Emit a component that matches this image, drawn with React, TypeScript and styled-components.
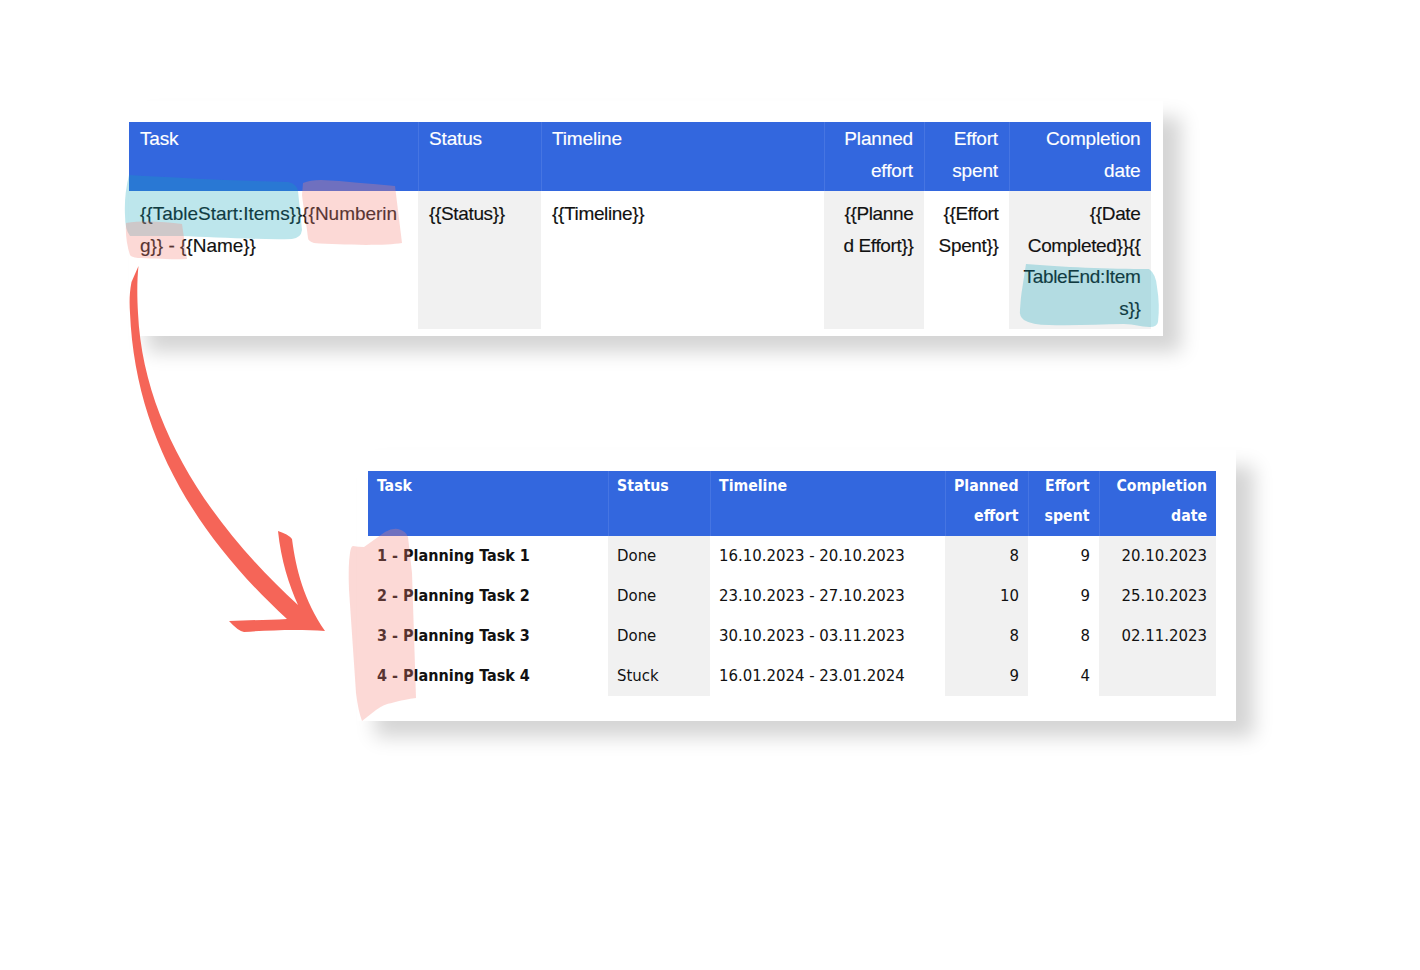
import React from 'react';
import styled, { createGlobalStyle, css } from 'styled-components';

type Align = 'left' | 'right';

interface Column {
  label: string[];
  width: number;
  align: Align;
  shaded: boolean;
}

const templateColumns: Column[] = [
  { label: ['Task'], width: 289, align: 'left', shaded: false },
  { label: ['Status'], width: 123, align: 'left', shaded: true },
  { label: ['Timeline'], width: 283, align: 'left', shaded: false },
  { label: ['Planned', 'effort'], width: 100, align: 'right', shaded: true },
  { label: ['Effort', 'spent'], width: 85, align: 'right', shaded: false },
  { label: ['Completion', 'date'], width: 142, align: 'right', shaded: true },
];

const templateRow = [
  ['{{TableStart:Items}}{{Numberin', 'g}} - {{Name}}'],
  ['{{Status}}'],
  ['{{Timeline}}'],
  ['{{Planne', 'd Effort}}'],
  ['{{Effort', 'Spent}}'],
  ['{{Date', 'Completed}}{{', 'TableEnd:Item', 's}}'],
];

const resultColumns: Column[] = [
  { label: ['Task'], width: 240, align: 'left', shaded: false },
  { label: ['Status'], width: 102, align: 'left', shaded: true },
  { label: ['Timeline'], width: 235, align: 'left', shaded: false },
  { label: ['Planned', 'effort'], width: 83, align: 'right', shaded: true },
  { label: ['Effort', 'spent'], width: 71, align: 'right', shaded: false },
  { label: ['Completion', 'date'], width: 117, align: 'right', shaded: true },
];

const resultRows = [
  ['1 - Planning Task 1', 'Done', '16.10.2023 - 20.10.2023', '8', '9', '20.10.2023'],
  ['2 - Planning Task 2', 'Done', '23.10.2023 - 27.10.2023', '10', '9', '25.10.2023'],
  ['3 - Planning Task 3', 'Done', '30.10.2023 - 03.11.2023', '8', '8', '02.11.2023'],
  ['4 - Planning Task 4', 'Stuck', '16.01.2024 - 23.01.2024', '9', '4', ''],
];

const App = () => {
  return (
    <Page>
      <GlobalStyle />
      <TemplateCard>
        <TemplateTable>
          <colgroup>
            {templateColumns.map((c) => (
              <col key={c.label[0]} width={c.width} />
            ))}
          </colgroup>
          <thead>
            <tr>
              {templateColumns.map((c) => (
                <TemplateHead key={c.label[0]} $align={c.align}>
                  {c.label.map((line) => (
                    <Line key={line}>{line}</Line>
                  ))}
                </TemplateHead>
              ))}
            </tr>
          </thead>
          <tbody>
            <tr>
              {templateColumns.map((c, i) => (
                <TemplateCell key={c.label[0]} $align={c.align} $shaded={c.shaded}>
                  {templateRow[i].map((line) => (
                    <Line key={line}>{line}</Line>
                  ))}
                </TemplateCell>
              ))}
            </tr>
          </tbody>
        </TemplateTable>
      </TemplateCard>

      <ResultCard>
        <ResultTable>
          <colgroup>
            {resultColumns.map((c) => (
              <col key={c.label[0]} width={c.width} />
            ))}
          </colgroup>
          <thead>
            <tr>
              {resultColumns.map((c) => (
                <ResultHead key={c.label[0]} $align={c.align}>
                  {c.label.map((line) => (
                    <Line key={line}>{line}</Line>
                  ))}
                </ResultHead>
              ))}
            </tr>
          </thead>
          <tbody>
            {resultRows.map((row) => (
              <tr key={row[0]}>
                {resultColumns.map((c, i) => (
                  <ResultCell key={c.label[0]} $align={c.align} $shaded={c.shaded} $strong={i === 0}>
                    {row[i]}
                  </ResultCell>
                ))}
              </tr>
            ))}
          </tbody>
        </ResultTable>
      </ResultCard>

      <Scribbles viewBox="0 0 1420 970" aria-hidden="true">
        <BlueMarker d="M129 175 C180 178 240 181 288 182 Q297 184 298 191 L302 230 Q301 238 292 239 C260 240 210 237 182 236 L130 236 Q125 230 125 215 Q124 195 129 175 Z" />
        <PinkMarker d="M126 223 C145 220 165 222 182 224 L187 259 C170 260 150 258 138 258 Q131 257 130 255 Q125 240 126 223 Z" />
        <PinkMarker d="M303 183 Q310 180 321 180 C345 181 370 184 395 186 L402 243 C385 246 340 245 314 243 Q308 241 308 238 C306 220 303 205 302 195 Z" />
        <BlueMarker d="M1026 264 C1060 267 1110 269 1149 269 Q1156 274 1157 287 Q1160 305 1158 322 Q1157 327 1150 327 C1140 327 1135 324 1124 324 C1100 324 1075 326 1049 325 Q1032 325 1024 320 Q1019 316 1020 310 Q1021 295 1022 290 Z" />
        <PinkMarker d="M350 553 Q351 546 353 546 Q358 547 364 547 L385 532 Q392 528 398 529 Q406 531 408 537 L412 573 L416 698 C400 700 392 703 392 703 Q384 704 376 710 L362 721 Q358 710 356 693 L349 590 Q348 565 350 553 Z" />
        <path
          fill="#f56558"
          d="M138.5 266 L131.5 282 C129 295 129.5 305 130 313 C135 430 190 530 287 619 C270 620 250 620 229 621 Q238 631 244 632 C270 630 300 629 325 631 C304 600 296 570 292 539 Q288 534 278 531 C281 560 289 585 298 605 C205 520 143 420 138 313 C137 295 137 280 138.5 266 Z"
        />
      </Scribbles>
    </Page>
  );
};

export default App;

const GlobalStyle = createGlobalStyle`
  html,
  body {
    margin: 0;
    padding: 0;
    background: #fff;
  }
`;

const Page = styled.main`
  position: relative;
  width: 1420px;
  height: 970px;
  overflow: hidden;
  padding-top: 101px;
  box-sizing: border-box;
  background: #fff;
`;

const Card = styled.section`
  background: #fff;
  box-shadow: 18px 16px 18px rgba(0, 0, 0, 0.17);
  box-sizing: border-box;
`;

const TemplateCard = styled(Card)`
  width: 1034px;
  margin-left: 129px;
  padding: 21px 12px 7px 0;
`;

const ResultCard = styled(Card)`
  width: 879px;
  margin: 114px 0 0 357px;
  padding: 21px 20px 25px 11px;
`;

const Table = styled.table`
  border-collapse: collapse;
  table-layout: fixed;
  width: 100%;
`;

const TemplateTable = styled(Table)`
  font-family: 'Liberation Sans', Arial, sans-serif;
  font-size: 19px;
  -webkit-text-stroke: 0.15px currentColor;
`;

const ResultTable = styled(Table)`
  font-family: 'DejaVu Sans Condensed', 'DejaVu Sans', sans-serif;
  font-stretch: condensed;
  font-size: 16.6px;
`;

const Line = styled.div`
  white-space: nowrap;
`;

const Head = styled.th<{ $align: Align }>`
  background: #3367de;
  color: #fff;
  vertical-align: top;
  text-align: ${({ $align }) => $align};
  border-left: 1px solid #4675e2;
  box-sizing: border-box;
  &:first-child {
    border-left: 0;
  }
`;

const TemplateHead = styled(Head)`
  height: 69px;
  padding: 1px 10.5px 0;
  font-weight: 400;
  line-height: 32px;
  letter-spacing: -0.15px;
  &:first-child {
    padding-left: 11px;
  }
`;

const ResultHead = styled(Head)`
  height: 65px;
  padding: 0 9px 0 8.5px;
  font-size: 15.7px;
  font-weight: 700;
  line-height: 30px;
  &:first-child {
    padding-left: 9px;
  }
`;

const bodyCell = css<{ $align: Align; $shaded: boolean }>`
  color: #111;
  vertical-align: top;
  box-sizing: border-box;
  text-align: ${({ $align }) => $align};
  background: ${({ $shaded }) => ($shaded ? '#f1f1f1' : '#fff')};
`;

const TemplateCell = styled.td<{ $align: Align; $shaded: boolean }>`
  ${bodyCell}
  height: 138px;
  padding: 7px 10.5px 0 11px;
  line-height: 31.6px;
  letter-spacing: -0.35px;
  &:first-child {
    letter-spacing: -0.02px;
  }
`;

const ResultCell = styled.td<{ $align: Align; $shaded: boolean; $strong: boolean }>`
  ${bodyCell}
  height: 40px;
  padding: 0 9px 1px;
  line-height: 39px;
  white-space: nowrap;
  ${({ $strong }) =>
    $strong &&
    css`
      padding-bottom: 0;
      line-height: 40px;
      font-weight: 700;
      font-size: 16px;
    `}
`;

const Scribbles = styled.svg`
  position: absolute;
  left: 0;
  top: 0;
  width: 1420px;
  height: 970px;
  pointer-events: none;
`;

const BlueMarker = styled.path`
  fill: rgb(19, 166, 187);
  fill-opacity: 0.28;
`;

const PinkMarker = styled.path`
  fill: rgb(245, 132, 122);
  fill-opacity: 0.31;
`;
